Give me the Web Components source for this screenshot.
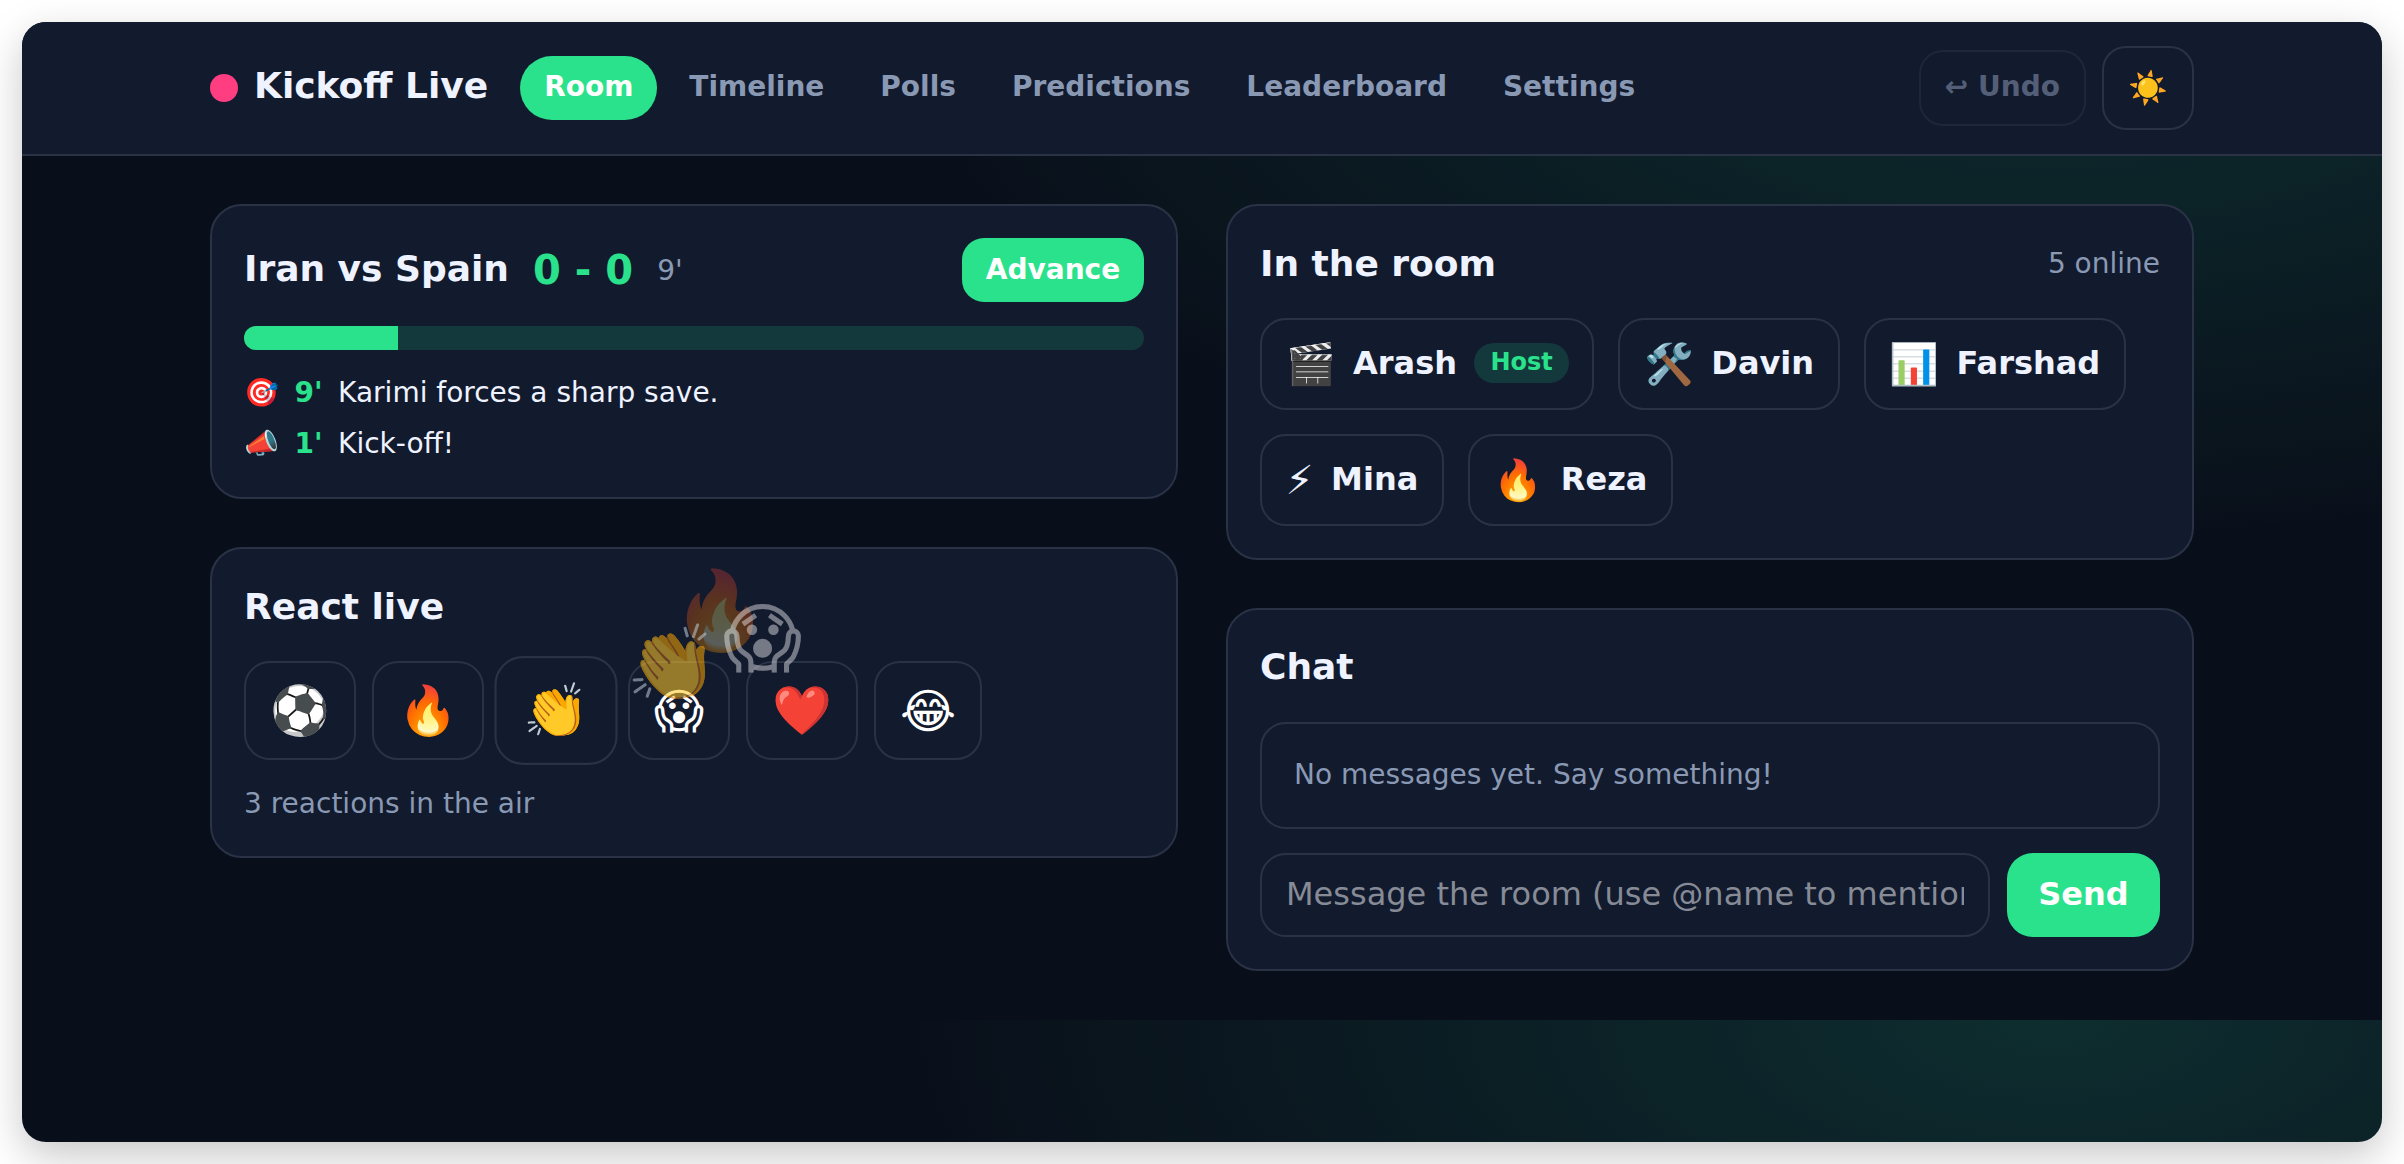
<!doctype html>
<html><head><meta charset="utf-8"><title>Kickoff Live</title>
<style>
html,body{margin:0;background:#fff}
body{font-family:"DejaVu Sans",sans-serif;color:#eef3ff}
</style></head><body>
<kl-app></kl-app>
<script>
const green='#2ae28b';
const line='#2a3245';
function def(name,css,html,init){
  customElements.define(name,class extends HTMLElement{
    constructor(){super();const r=this.attachShadow({mode:'open'});
      r.innerHTML=`<style>*{box-sizing:border-box}${css}</style>${typeof html==='function'?html(this):html}`;
      if(init)init(this,r);}
  });
}
def('kl-nav-item',`:host{display:block}
 a{display:block;height:64px;line-height:62px;padding:0 24px 2px;border-radius:32px;font-weight:700;font-size:28px;color:#8a99b3;white-space:nowrap}
 :host([active]) a{background:${green};color:#fff}`,`<a><slot></slot></a>`);
def('kl-icon-btn',`:host{display:block}
 button{display:block;font:inherit;font-family:"DejaVu Sans",sans-serif;font-weight:700;font-size:28px;color:#8a99b3;background:transparent;border:2px solid ${line};border-radius:24px;height:84px;padding:0 24px;white-space:nowrap}
 :host([disabled]) button{opacity:.55;height:76px;padding-bottom:3px;border-color:rgba(255,255,255,.1)}
 :host([big]) button{font-size:32px;font-weight:400;color:#eef3ff}`,`<button><slot></slot></button>`);
def('kl-header',`:host{display:block;background:#121a2e;border-bottom:2px solid ${line};height:134px}
 .in{width:1984px;margin:0 auto;height:132px;display:flex;align-items:center}
 .dot{width:28px;height:28px;border-radius:50%;background:#ff3d81;margin-right:16px;flex:none}
 .brand{font-weight:700;font-size:36px;white-space:nowrap;margin-right:32px;color:#eef3ff;padding-bottom:5px}
 nav{display:flex;gap:8px;align-items:center}
 .r{margin-left:auto;display:flex;gap:16px;align-items:center}`,
 `<div class="in"><span class="dot"></span><span class="brand">Kickoff Live</span>
 <nav><kl-nav-item active>Room</kl-nav-item><kl-nav-item>Timeline</kl-nav-item><kl-nav-item>Polls</kl-nav-item><kl-nav-item>Predictions</kl-nav-item><kl-nav-item>Leaderboard</kl-nav-item><kl-nav-item>Settings</kl-nav-item></nav>
 <div class="r"><kl-icon-btn disabled>↩ Undo</kl-icon-btn><kl-icon-btn big>☀️</kl-icon-btn></div></div>`);
def('kl-card',`:host{display:block;position:relative;background:#121a2e;border:2px solid ${line};border-radius:32px;padding:32px}`,`<slot></slot>`);
def('kl-score-card',`:host{display:block}
 .top{display:flex;align-items:center;height:64px;gap:24px}
 .t{font-weight:700;font-size:36px;color:#eef3ff;white-space:nowrap;padding-bottom:3px}
 .s{font-weight:700;font-size:40px;color:${green};white-space:nowrap}
 .m{font-size:28px;color:#8a99b3}
 button{margin-left:auto;height:64px;width:182px;border:0;border-radius:22px;background:${green};color:#fff;font:700 28px "DejaVu Sans",sans-serif;padding:0 0 2px}
 .bar{height:24px;border-radius:12px;background:#14393d;overflow:hidden;margin-top:24px}
 .bar i{display:block;height:100%;width:17.1%;background:${green}}
 .ev{margin:22px 0 2px;display:flex;flex-direction:column;gap:11px}
 .row{display:flex;gap:15.5px;font-size:28px;height:40px;align-items:center;white-space:nowrap;color:#eef3ff}
 .row b{color:${green};font-weight:700}`,
 `<kl-card><div class="top"><span class="t">Iran vs Spain</span><span class="s">0 - 0</span><span class="m">9'</span><button>Advance</button></div>
 <div class="bar"><i></i></div>
 <div class="ev"><div class="row"><span>🎯</span><b>9'</b><span>Karimi forces a sharp save.</span></div>
 <div class="row"><span>📣</span><b>1'</b><span>Kick-off!</span></div></div></kl-card>`);
def('kl-reaction',`:host{display:block}
 button{display:block;height:99px;padding:0 24px;font:400 48px "DejaVu Sans",sans-serif;color:#fff;background:transparent;border:2px solid ${line};border-radius:26px;white-space:nowrap}
 :host([hot]) button{transform:scale(1.1)}`,`<button><slot></slot></button>`);
def('kl-float',`:host{display:block;position:absolute;line-height:1;white-space:nowrap;pointer-events:none;color:#fff}`,`<slot></slot>`);
def('kl-react-card',`:host{display:block}
 h2{margin:0;padding-top:2px;font-size:36px;font-weight:700;line-height:48px;color:#eef3ff}
 .btns{display:flex;gap:16px;margin-top:30px}
 p{margin:24px 0 0;font-size:28px;line-height:40px;color:#8a99b3}`,
 `<kl-card><h2>React live</h2>
 <div class="btns"><kl-reaction>⚽</kl-reaction><kl-reaction>🔥</kl-reaction><kl-reaction hot>👏</kl-reaction><kl-reaction>😱</kl-reaction><kl-reaction>❤️</kl-reaction><kl-reaction>😂</kl-reaction></div>
 <p>3 reactions in the air</p>
 <kl-float style="left:460px;top:23px;font-size:77px;opacity:.3">🔥</kl-float>
 <kl-float style="left:414px;top:77px;font-size:74px;opacity:.55">👏</kl-float>
 <kl-float style="left:511px;top:52px;font-size:76px;opacity:.42">😱</kl-float>
 </kl-card>`);
def('kl-chip',`:host{display:block}
 .c{display:flex;align-items:center;gap:17.5px;height:92px;padding:0 23.5px;border:2px solid ${line};border-radius:26px;font-weight:700;font-size:32px;color:#eef3ff;white-space:nowrap}
 .e{font-size:40px;font-weight:400}
 .n{padding-bottom:3px}
 .h{font-size:24px;color:${green};background:#14393d;border-radius:20px;height:40px;line-height:38px;padding:0 16px;margin-top:-2px}`,
 h=>`<div class="c"><span class="e">${h.getAttribute('emoji')}</span><span class="n"><slot></slot></span>${h.hasAttribute('host')?'<span class="h">Host</span>':''}</div>`);
def('kl-room-card',`:host{display:block}
 .top{display:flex;justify-content:space-between;align-items:center;height:50px}
 h2{margin:0;font-size:36px;font-weight:700;color:#eef3ff}
 span{font-size:28px;color:#8a99b3}
 .list{display:flex;flex-wrap:wrap;gap:24px;margin-top:30px}`,
 `<kl-card><div class="top"><h2>In the room</h2><span>5 online</span></div>
 <div class="list"><kl-chip emoji="🎬" host>Arash</kl-chip><kl-chip emoji="🛠️">Davin</kl-chip><kl-chip emoji="📊">Farshad</kl-chip><kl-chip emoji="⚡">Mina</kl-chip><kl-chip emoji="🔥">Reza</kl-chip></div></kl-card>`);
def('kl-chat-card',`:host{display:block}
 h2{margin:0;padding-top:1px;font-size:36px;font-weight:700;line-height:48px;color:#eef3ff}
 .box{margin-top:31px;height:107px;border:2px solid ${line};border-radius:26px;padding:0 32px 3px;display:flex;align-items:center;font-size:28px;color:#8a99b3}
 .form{display:flex;gap:17.5px;margin-top:24px}
 input{flex:1;min-width:0;height:84px;border:2px solid ${line};border-radius:26px;background:transparent;padding:0 24px 2px;font:400 32px "DejaVu Sans",sans-serif;color:#eef3ff;outline:0}
 input::placeholder{color:#868b96;opacity:1}
 button{flex:none;width:153px;height:84px;border:0;border-radius:26px;background:${green};color:#fff;font:700 32px "DejaVu Sans",sans-serif;padding:0 0 3px}`,
 `<kl-card><h2>Chat</h2><div class="box">No messages yet. Say something!</div>
 <div class="form"><input placeholder="Message the room (use @name to mention someone)"><button>Send</button></div></kl-card>`);
def('kl-app',`:host{display:block;padding:22px}
 .win{width:2360px;height:1120px;border-radius:24px;overflow:hidden;box-shadow:0 14px 40px rgba(0,0,0,.22);
  background-color:#090f1a;background-image:radial-gradient(1150px 520px at 86% 0,rgba(40,220,170,.15),rgba(40,220,170,0));background-size:100% 998px;background-repeat:repeat}
 main{width:1984px;margin:0 auto;padding-top:48px;display:grid;grid-template-columns:968px 968px;column-gap:48px;align-items:start}
 .col{display:flex;flex-direction:column;gap:48px}`,
 `<div class="win"><kl-header></kl-header><main>
 <div class="col"><kl-score-card></kl-score-card><kl-react-card></kl-react-card></div>
 <div class="col"><kl-room-card></kl-room-card><kl-chat-card></kl-chat-card></div>
 </main></div>`);
</script>
</body></html>
